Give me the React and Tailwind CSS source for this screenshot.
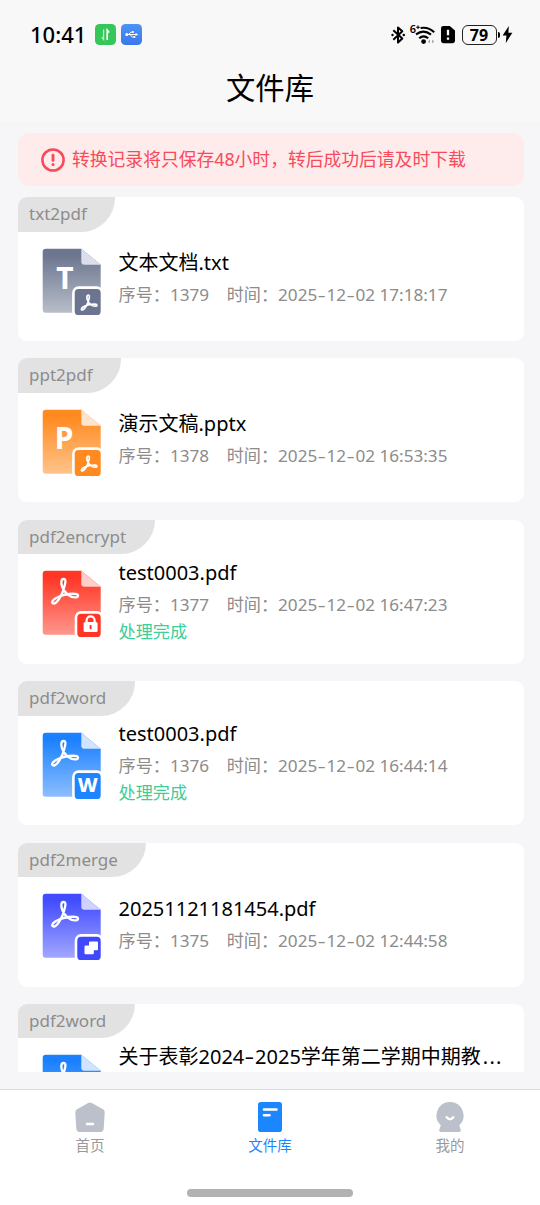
import React, { useState } from 'react';

const records = [
  { id: 1379, tag: 'txt2pdf', name: '文本文档.txt', time: '2025-12-02 17:18:17', icon: 'txt' },
  { id: 1378, tag: 'ppt2pdf', name: '演示文稿.pptx', time: '2025-12-02 16:53:35', icon: 'ppt' },
  { id: 1377, tag: 'pdf2encrypt', name: 'test0003.pdf', time: '2025-12-02 16:47:23', icon: 'encrypt', status: '处理完成' },
  { id: 1376, tag: 'pdf2word', name: 'test0003.pdf', time: '2025-12-02 16:44:14', icon: 'word', status: '处理完成' },
  { id: 1375, tag: 'pdf2merge', name: '20251121181454.pdf', time: '2025-12-02 12:44:58', icon: 'merge' },
  { id: 1374, tag: 'pdf2word', name: '关于表彰2024-2025学年第二学期中期教', cut: true, icon: 'word', status: '' }
];

const palette = {
  txt: { from: '#6c768f', to: '#b8bdc9', fold: '#dcdfeb', badge: '#6b7590' },
  ppt: { from: '#ff8a1f', to: '#ffc48a', fold: '#ffe3ca', badge: '#ff8a20' },
  encrypt: { from: '#ff3625', to: '#ff968c', fold: '#ffcdca', badge: '#ff3626' },
  word: { from: '#1a80ff', to: '#8dbeff', fold: '#d0e4ff', badge: '#1f85ff' },
  merge: { from: '#414cff', to: '#a2a7ff', fold: '#cfd2ff', badge: '#4048fb' }
};

const PdfMark = ({ transform, width = 2.3 }) => (
  <path
    transform={transform}
    d="M21.5 9C18.5 9 19 14 20.5 17.5C22.5 22.5 27.5 27.3 33 27.3C37 27.3 37 24 33 23.8C27 23.5 20 25 15 27.5C9.5 30 9 34 12 33.5C15.5 33 20.5 24 22 18C23.5 13 24.5 9 21.5 9Z"
    fill="none"
    stroke="#fff"
    strokeWidth={width}
    strokeLinejoin="round"
  />
);

const FileIcon = ({ type }) => {
  const c = palette[type];
  const small = type === 'encrypt' || type === 'merge';
  const fromText = type === 'txt' || type === 'ppt';

  return (
    <svg width="62" height="70" viewBox="0 0 62 70" className="shrink-0">
      <defs>
        <linearGradient id={`page-${type}`} x1="0" y1="0" x2="0" y2="1">
          <stop offset="0.1" stopColor={c.from} />
          <stop offset="1" stopColor={c.to} />
        </linearGradient>
      </defs>
      <path d="M4 .7H39.3L58.7 16.7V61.7a3 3 0 0 1-3 3H3.7a3 3 0 0 1-3-3V3.7a3 3 0 0 1 3-3Z" fill={`url(#page-${type})`} />
      <path d="M39.3 .7L58.7 16.7H42.3a3 3 0 0 1-3-3Z" fill={c.fold} />

      {fromText ? (
        <text x={type === 'txt' ? 23 : 22} y={type === 'txt' ? 40.6 : 39.6} textAnchor="middle" fontSize="30" fontWeight="700" fill="#fff">
          {type === 'txt' ? 'T' : 'P'}
        </text>
      ) : (
        <PdfMark />
      )}

      {small ? (
        <rect x="34" y="42.4" width="26" height="26" rx="5.2" fill={c.badge} stroke="#fff" strokeWidth="2.6" />
      ) : (
        <rect x="31.4" y="39.6" width="28.6" height="28.8" rx="5.2" fill={c.badge} stroke="#fff" strokeWidth="2.6" />
      )}
      {fromText && <PdfMark transform="translate(33.3 41.8) scale(.6)" width={2.9} />}
      {type === 'word' && (
        <text x="45.7" y="60.3" textAnchor="middle" fontSize="20" fontWeight="800" fill="#fff">W</text>
      )}
      {type === 'encrypt' && (
        <g>
          <path d="M44.6 53v-2.6a4 4 0 0 1 8 0V53" fill="none" stroke="#fff" strokeWidth="2.2" />
          <rect x="41.6" y="52" width="14" height="10" rx="1.6" fill="#fff" />
          <rect x="47.6" y="55" width="2" height="4.2" rx=".8" fill={c.badge} />
        </g>
      )}
      {type === 'merge' && (
        <path d="M48 48.6h7a1 1 0 0 1 1 1v6.7a1 1 0 0 1-1 1h-3.2v3a1 1 0 0 1-1 1h-7.3a1 1 0 0 1-1-1v-6.7a1 1 0 0 1 1-1H47v-3a1 1 0 0 1 1-1Z" fill="#fff" />
      )}
    </svg>
  );
};

// Hyphens in dates are drawn wider than the font's own
const Dashed = ({ text }) =>
  text.split('-').map((part, i) => (
    <React.Fragment key={i}>
      {i > 0 && <span className="inline-block w-[0.54em] scale-x-[1.5] text-center">-</span>}
      {part}
    </React.Fragment>
  ));

const StatusBar = () => (
  <div className="flex h-[69px] shrink-0 items-center justify-between pl-[30px] pr-[27px]">
    <div className="flex items-center">
      <span className="w-[65px] pb-[1px] text-[22px] font-medium leading-none text-black">10:41</span>
      <svg width="21" height="21" viewBox="0 0 21 21">
        <rect width="21" height="21" rx="4.5" fill="#35c759" />
        <path d="M8.6 5.5v10L6.8 13.2" fill="none" stroke="#c9f3d3" strokeWidth="1.2" />
        <path d="M12.2 16V6l2 2.4" fill="none" stroke="#fff" strokeWidth="1.6" />
      </svg>
      <svg width="21" height="21" viewBox="0 0 21 21" className="ml-[5px]">
        <defs>
          <linearGradient id="usb" x1="0" y1="0" x2="0" y2="1">
            <stop stopColor="#4b94f5" />
            <stop offset="1" stopColor="#3b78ea" />
          </linearGradient>
        </defs>
        <rect width="21" height="21" rx="4.5" fill="url(#usb)" />
        <path d="M5 10.5h10M7.5 10.5l2.3-2.3h2M9 10.5l2.3 2.5h2" fill="none" stroke="#fff" strokeWidth="1" />
        <circle cx="5.8" cy="10.5" r="1.5" fill="#fff" />
        <circle cx="12" cy="8.1" r="1" fill="#fff" />
        <rect x="12.5" y="12.1" width="1.8" height="1.8" fill="#fff" />
        <path d="M14.6 8.9l2.6 1.6-2.6 1.6Z" fill="#fff" />
      </svg>
    </div>

    <div className="flex items-center">
      <svg width="15" height="20" viewBox="0 0 15 20">
        <path d="M2.3 5.2l9 8.4L7 17.6V2.4l4.3 3.9-9 8.4" fill="none" stroke="#000" strokeWidth="2" strokeLinejoin="round" />
        <circle cx="1.5" cy="10" r="1.2" />
        <circle cx="12.8" cy="10" r="1.2" />
      </svg>
      <svg width="26" height="22" viewBox="0 0 26 22" className="ml-1 overflow-visible">
        <text x="-.2" y="9.2" fontSize="11" fontWeight="600">6</text>
        <path d="M6.2 3.2h3.6M8 1.4v3.6" stroke="#000" strokeWidth="1.1" />
        <path d="M10.6 3.9Q18.6 2.6 24.2 8.2" fill="none" stroke="#000" strokeWidth="2" />
        <path d="M6 10.4Q13.5 4.6 21 10.6M9.2 14.2Q13.6 10.4 18.2 14.2" fill="none" stroke="#000" strokeWidth="2.1" />
        <circle cx="13.6" cy="17.6" r="2.4" />
        <path d="M20 15.6v4l-2.2-2zM22 15.6v4l2.2-2z" fill="#aaa" />
      </svg>
      <svg width="14" height="19" viewBox="0 0 14 19" className="ml-[5px]">
        <path d="M2.5 1H8.8L14 5.6V15.8a2.4 2.4 0 0 1-2.4 2.4H2.4A2.4 2.4 0 0 1 0 15.8V3.4A2.4 2.4 0 0 1 2.5 1Z" />
        <path d="M7 4.8v5.4M7 12.4v2.3" stroke="#fff" strokeWidth="2.3" />
      </svg>
      <div className="ml-[7px] flex h-5 w-[35px] items-center justify-center rounded-[6px] border-[1.5px] border-[#222] text-[16px] font-bold leading-none text-black">
        79
      </div>
      <div className="ml-[1.5px] h-[6px] w-[2px] rounded-r bg-black" />
      <svg width="11" height="19" viewBox="0 0 11 19" className="ml-[2px]">
        <path d="M6.8 1L.6 10.6h3.8L3.8 18 10.4 7.8H6.4Z" />
      </svg>
    </div>
  </div>
);

const RecordCard = ({ item }) => (
  <div className="h-[144px] shrink-0 overflow-hidden rounded-[9px] bg-white">
    <div className="flex h-[34.5px] w-fit items-center rounded-br-[34px] bg-[#e2e2e2] pb-[1px] pl-[11.5px] pr-[28.5px] text-[17px] text-[#8c8c8c]">
      {item.tag}
    </div>
    <div className="flex pl-[24.5px]">
      <div className="pt-4">
        <FileIcon type={item.icon} />
      </div>
      <div className="ml-[14.5px] flex h-[92px] min-w-0 flex-col justify-center">
        <div className="h-[34px] whitespace-nowrap text-[20px] leading-[34px] text-black">
          <Dashed text={item.name} />
          {item.cut && <span className="ml-[2px] tracking-[1.2px]">...</span>}
        </div>
        <div className="flex h-[29px] whitespace-nowrap text-[17.15px] leading-[29px] text-[#8c8c8c]">
          {item.time && (
            <>
              <span>序号：{item.id}</span>
              <span className="ml-[17.5px]">时间：<Dashed text={item.time} /></span>
            </>
          )}
        </div>
        {item.status !== undefined && (
          <div className="h-[26px] text-[17.15px] leading-[26px] text-[#3dcd98]">{item.status}</div>
        )}
      </div>
    </div>
  </div>
);

const HomeIcon = () => (
  <svg width="30" height="30" viewBox="0 0 30 30">
    <path d="M13.2 1Q15 0 16.8 1L28 7.2Q29.8 8.3 29.7 10.4L28.7 26.4Q28.4 30 24.9 30H5.1Q1.6 30 1.3 26.4L.3 10.4Q.2 8.3 2 7.2Z" fill="currentColor" />
    <path d="M12 22h6" stroke="#fff" strokeWidth="2.4" strokeLinecap="round" />
  </svg>
);

const LibraryIcon = () => (
  <svg width="30" height="30" viewBox="0 0 30 30">
    <rect x="3" width="24" height="30" rx="2.8" fill="currentColor" />
    <path d="M9 7.5h12.5M9 13.3h5.5" stroke="#fff" strokeWidth="2.6" strokeLinecap="round" />
  </svg>
);

const MineIcon = () => (
  <svg width="30" height="30" viewBox="0 0 30 30">
    <path d="M15 0a13.4 13.4 0 0 1 9.2 23.2L25.8 28q.4 2-1.6 2H5.8q-2 0-1.6-2L5.8 23.2A13.4 13.4 0 0 1 15 0Z" fill="currentColor" />
    <path d="M11.7 15.2q3.3 4 6.6 0" fill="none" stroke="#fff" strokeWidth="2.4" strokeLinecap="round" />
  </svg>
);

const tabs = [
  { key: 'home', label: '首页', Icon: HomeIcon },
  { key: 'library', label: '文件库', Icon: LibraryIcon },
  { key: 'mine', label: '我的', Icon: MineIcon }
];

const App = () => {
  const [active, setActive] = useState('library');

  return (
    <div lang="zh-CN" className="flex h-[1205px] w-[540px] flex-col overflow-hidden bg-[#f6f6f9] font-['Noto_Sans','Noto_Sans_CJK_SC',sans-serif]">
      <header className="flex h-[122px] shrink-0 flex-col bg-[#f8f8f8]">
        <StatusBar />
        <h1 className="text-center text-[29.3px] leading-[38px] text-black">文件库</h1>
      </header>

      {/* Aviso */}
      <div className="ml-[17.5px] mr-[16.5px] mt-[11px] flex h-[53px] shrink-0 items-center rounded-[11px] bg-[#feebeb] pl-[23px] text-[17.8px] text-[#f74a5a]">
        <svg width="24" height="24" viewBox="0 0 24 24">
          <circle cx="12" cy="12" r="10.6" fill="none" stroke="currentColor" strokeWidth="2.5" />
          <path d="M12 7.2v5.2" stroke="currentColor" strokeWidth="2.8" strokeLinecap="round" />
          <circle cx="12" cy="16.6" r="1.5" fill="currentColor" />
        </svg>
        <span className="ml-[7.5px] whitespace-nowrap">转换记录将只保存48小时，转后成功后请及时下载</span>
      </div>

      {/* Lista de registros */}
      <main className="ml-[17.5px] mr-[16.5px] mt-[11px] flex h-[875px] shrink-0 flex-col gap-[17.4px] overflow-hidden">
        {records.map((item) => (
          <RecordCard key={item.id} item={item} />
        ))}
      </main>

      <nav className="mt-[17px] flex flex-1 flex-col items-center border-t border-[#dcdde0] bg-white">
        <div className="grid w-full grid-cols-3">
          {tabs.map(({ key, label, Icon }) => (
            <button
              key={key}
              onClick={() => setActive(key)}
              className={`flex flex-col items-center pt-3 ${active === key ? 'text-[#1c86ff]' : 'text-[#bcc0ca]'}`}
            >
              <Icon />
              <span className={`mt-[3px] text-[14.5px] leading-[20px] ${active === key ? '' : 'text-[#999]'}`}>{label}</span>
            </button>
          ))}
        </div>
        <div className="mt-[34px] h-2 w-[166px] rounded-full bg-[#b2b2b2]" />
      </nav>
    </div>
  );
};

export default App;
